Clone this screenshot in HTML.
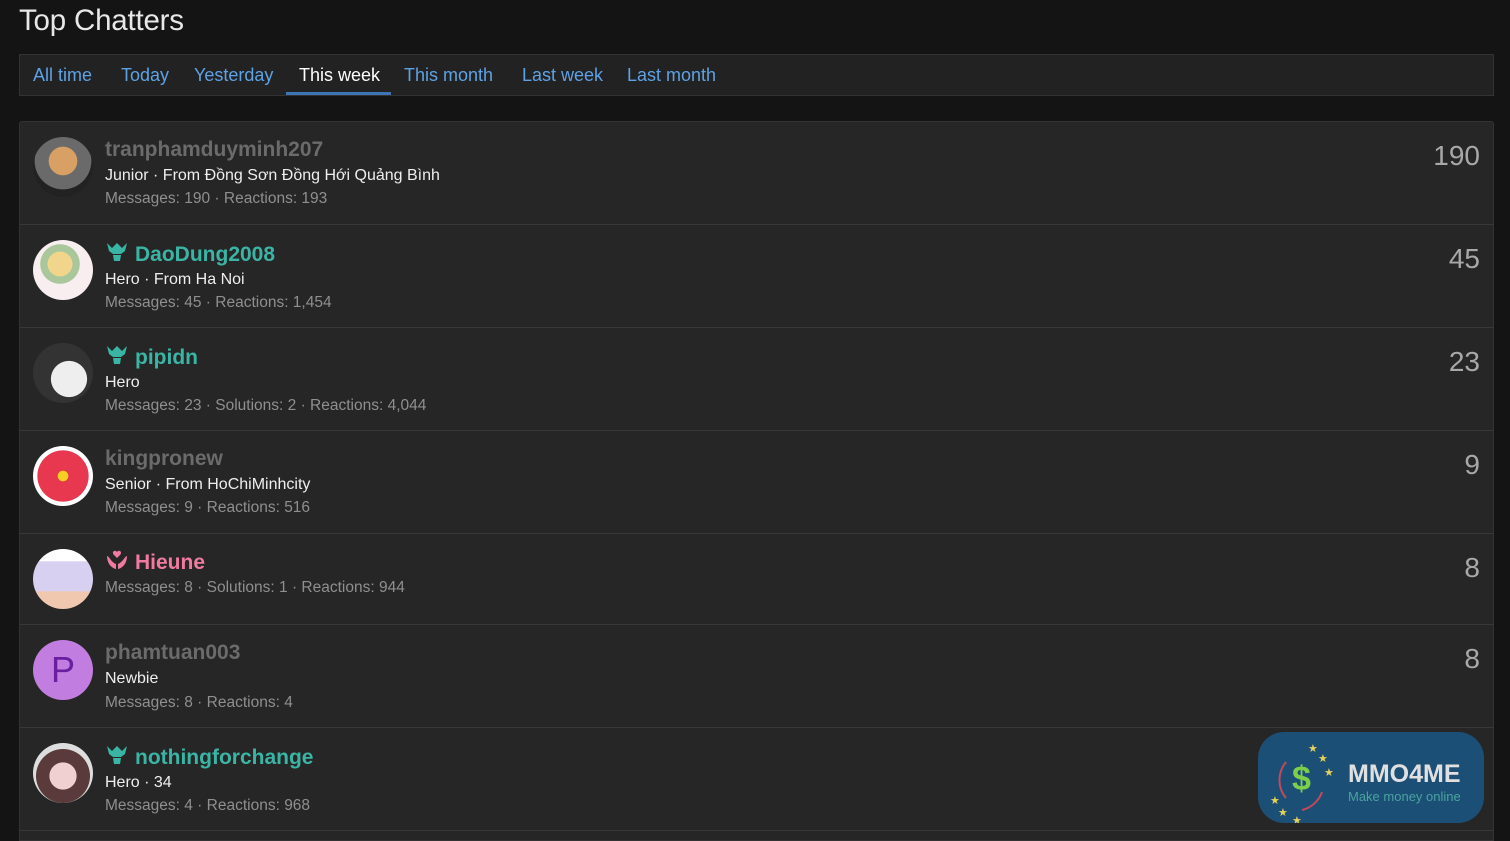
<!DOCTYPE html>
<html><head><meta charset="utf-8"><style>
*{box-sizing:border-box;margin:0;padding:0}
body{width:1510px;height:838px;overflow:hidden;background:#141414;font-family:"Liberation Sans",sans-serif;color:#ddd;position:relative}
h1{position:absolute;left:19px;top:4px;font-size:29.5px;font-weight:normal;color:#e8e8e8;letter-spacing:-0.2px}
.tabs{position:absolute;left:19px;top:54px;width:1475px;height:42px;background:#222;border:1px solid #333;}
.tabs span{position:absolute;top:10px;font-size:18px;color:#5ea2e6}
.tabs span.act{color:#fff}
.ul{position:absolute;left:266px;top:37px;width:105px;height:3px;background:#3d74b3}
.list{position:absolute;left:19px;top:121px;width:1475px;height:720px;background:#262626;border:1px solid #333;border-radius:3px 3px 0 0}
.row{position:absolute;left:0;width:1473px;border-bottom:1px solid #383838}
.av{position:absolute;left:13px;width:60px;height:60px;border-radius:50%;overflow:hidden}
.name{position:absolute;left:85px;font-size:21px;font-weight:bold;color:#6b6b6b}
.teal{color:#3ab5a5}.pink{color:#f07aa0}
.t{position:absolute;left:85px;font-size:16px;color:#eee}
.m{position:absolute;left:85px;font-size:15.5px;color:#8f8f8f}
.n{position:absolute;right:13px;font-size:28px;color:#a8a8a8}
.ic{display:inline-block;vertical-align:-2px;margin-right:6px}
</style></head><body>
<h1>Top Chatters</h1>
<div class="tabs">
<span style="left:13px">All time</span><span style="left:101px">Today</span><span style="left:174px">Yesterday</span><span class="act" style="left:279px">This week</span><span style="left:384px">This month</span><span style="left:502px">Last week</span><span style="left:607px">Last month</span>
<div class="ul"></div></div>
<div class="list">
<div class="row" style="top:0;height:103px">
<div class="av" style="top:15px;background:radial-gradient(circle at 50% 40%,#d9a066 0 30%,#6a6a6a 31% 60%,#222 61%)"></div>
<div class="name" style="top:16px">tranphamduyminh207</div>
<div class="t" style="top:45px">Junior · From Đồng Sơn Đồng Hới Quảng Bình</div>
<div class="m" style="top:68px">Messages: 190 · Reactions: 193</div>
<div class="n" style="top:18px">190</div></div>
<div class="row" style="top:103px;height:103px">
<div class="av" style="top:15px;background:radial-gradient(circle at 45% 40%,#f1d58a 0 25%,#a9c79a 26% 40%,#f8eef0 41%)"></div>
<div class="name teal" style="top:16px"><svg class="ic" width="24" height="22" viewBox="0 0 24 22"><path d="M2 2l5 5 5-5 5 5 5-5-2 8-4 3h-8l-4-3z M8 14h8l-1 6h-6z" fill="#3ab5a5"/></svg>DaoDung2008</div>
<div class="t" style="top:46px">Hero · From Ha Noi</div>
<div class="m" style="top:69px">Messages: 45 · Reactions: 1,454</div>
<div class="n" style="top:18px">45</div></div>
<div class="row" style="top:206px;height:103px">
<div class="av" style="top:15px;background:radial-gradient(circle at 60% 60%,#eee 0 35%,#333 36%)"></div>
<div class="name teal" style="top:16px"><svg class="ic" width="24" height="22" viewBox="0 0 24 22"><path d="M2 2l5 5 5-5 5 5 5-5-2 8-4 3h-8l-4-3z M8 14h8l-1 6h-6z" fill="#3ab5a5"/></svg>pipidn</div>
<div class="t" style="top:46px">Hero</div>
<div class="m" style="top:69px">Messages: 23 · Solutions: 2 · Reactions: 4,044</div>
<div class="n" style="top:18px">23</div></div>
<div class="row" style="top:309px;height:103px">
<div class="av" style="top:15px;background:radial-gradient(circle,#f5d020 0 12%,#e8384f 13% 60%,#fff 61%)"></div>
<div class="name" style="top:16px">kingpronew</div>
<div class="t" style="top:45px">Senior · From HoChiMinhcity</div>
<div class="m" style="top:68px">Messages: 9 · Reactions: 516</div>
<div class="n" style="top:18px">9</div></div>
<div class="row" style="top:412px;height:91px">
<div class="av" style="top:15px;background:linear-gradient(#fff 0 20%,#d8d0f0 21% 70%,#f0c8b0 71%)"></div>
<div class="name pink" style="top:15px"><svg class="ic" width="24" height="22" viewBox="0 0 24 22"><path d="M12 3c-2-3-6 0-3 3l3 3 3-3c3-3-1-6-3-3z M2 7c2 0 4 6 9 8v5c-5-1-9-6-9-13z M22 7c-2 0-4 6-9 8v5c5-1 9-6 9-13z" fill="#f07aa0"/></svg>Hieune</div>
<div class="m" style="top:45px">Messages: 8 · Solutions: 1 · Reactions: 944</div>
<div class="n" style="top:18px">8</div></div>
<div class="row" style="top:503px;height:103px">
<div class="av" style="top:15px;background:#c27de0;color:#6b1fa0;font-size:36px;text-align:center;line-height:60px">P</div>
<div class="name" style="top:16px">phamtuan003</div>
<div class="t" style="top:45px">Newbie</div>
<div class="m" style="top:69px">Messages: 8 · Reactions: 4</div>
<div class="n" style="top:18px">8</div></div>
<div class="row" style="top:606px;height:103px">
<div class="av" style="top:15px;background:radial-gradient(circle at 50% 55%,#f0d0d0 0 30%,#5a3a3a 31% 60%,#ddd 61%)"></div>
<div class="name teal" style="top:16px"><svg class="ic" width="24" height="22" viewBox="0 0 24 22"><path d="M2 2l5 5 5-5 5 5 5-5-2 8-4 3h-8l-4-3z M8 14h8l-1 6h-6z" fill="#3ab5a5"/></svg>nothingforchange</div>
<div class="t" style="top:46px">Hero · 34</div>
<div class="m" style="top:69px">Messages: 4 · Reactions: 968</div>
<div class="n" style="top:18px">4</div></div>
</div>
<div style="position:absolute;left:1258px;top:732px;width:226px;height:91px;border-radius:26px;background:#1c4f75">
<svg width="80" height="91" style="position:absolute;left:6px;top:0"><path d="M22 30a28 28 0 0 0 0 36" stroke="#c04a5a" stroke-width="2" fill="none"/><path d="M58 60a28 28 0 0 1-20 18" stroke="#c04a5a" stroke-width="2" fill="none"/><text x="28" y="58" font-size="34" font-weight="bold" fill="#7ccf4a" font-family="Liberation Sans">$</text><text x="44" y="20" font-size="11" fill="#e6d15a">★</text><text x="54" y="30" font-size="11" fill="#e6d15a">★</text><text x="60" y="44" font-size="11" fill="#e6d15a">★</text><text x="6" y="72" font-size="11" fill="#e6d15a">★</text><text x="14" y="84" font-size="11" fill="#e6d15a">★</text><text x="28" y="92" font-size="11" fill="#e6d15a">★</text></svg>
<div style="position:absolute;left:90px;top:28px;font-size:25px;font-weight:bold;color:#e0e0e0">MMO4ME</div>
<div style="position:absolute;left:90px;top:57px;font-size:13px;color:#4aa3a0">Make money online</div>
</div>
</body></html>
